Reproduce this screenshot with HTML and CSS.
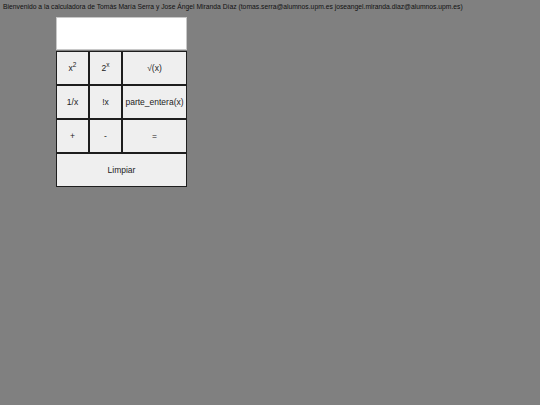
FILE: index.html
```html
<!DOCTYPE html>
<html lang="es">
<head>
<meta charset="utf-8">
<title>Calculadora</title>
<link rel="stylesheet" href="styles.css">
</head>
<body>
<p class="intro">Bienvenido a la calculadora de Tomás María Serra y Jose Ángel Miranda Díaz (tomas.serra@alumnos.upm.es joseangel.miranda.diaz@alumnos.upm.es)</p>
<div class="calc">
  <div class="display"></div>
  <div class="keys">
    <button class="key">x<sup>2</sup></button>
    <button class="key">2<sup>x</sup></button>
    <button class="key">√(x)</button>
    <button class="key">1/x</button>
    <button class="key">!x</button>
    <button class="key">parte_entera(x)</button>
    <button class="key">+</button>
    <button class="key">-</button>
    <button class="key">=</button>
    <button class="key wide">Limpiar</button>
  </div>
</div>
</body>
</html>
```
FILE: styles.css
```css
html, body {
  margin: 0;
  padding: 0;
  background: #808080;
}
body {
  font-family: "Liberation Sans", Arial, sans-serif;
  color: #111;
}
.intro {
  margin: 0;
  padding: 2px 0 0 3px;
  font-size: 6.75px;
  line-height: 9px;
  white-space: nowrap;
}
.calc {
  margin: 6px 0 0 56px;
  width: 131px;
}
.display {
  background: #fff;
  border: 1px solid #c8c8c8;
  box-sizing: border-box;
  height: 33px;
}
.keys {
  display: grid;
  grid-template-columns: 33px 33px 65px;
  grid-auto-rows: 34px;
  margin-top: 1px;
}
.key {
  margin: 0;
  padding: 0;
  background: #efefef;
  border: 1px solid #1e1e1e;
  font-family: "Liberation Sans", Arial, sans-serif;
  font-size: 8.5px;
  color: #222;
  line-height: 1;
}
.key sup {
  font-size: 6.5px;
  vertical-align: 4px;
  line-height: 0;
}
.wide {
  grid-column: 1 / 4;
}
```
